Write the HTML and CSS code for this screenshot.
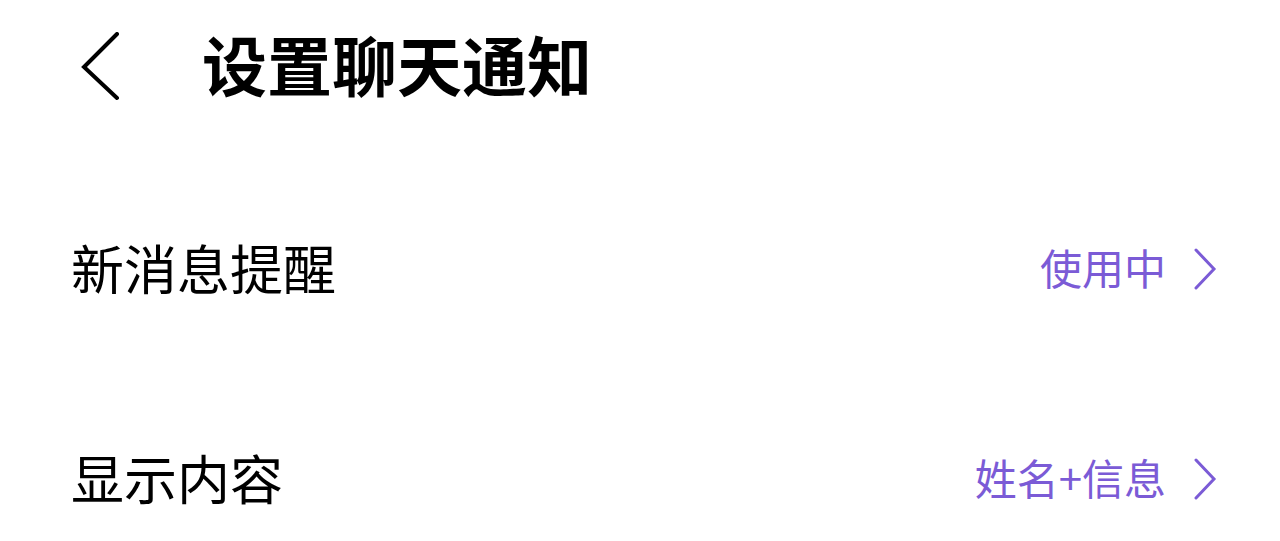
FILE: index.html
```html
<!DOCTYPE html>
<html lang="zh">
<head>
<meta charset="utf-8">
<link rel="stylesheet" href="styles.css">
</head>
<body>
<div class="page">
  <header class="header">
    <svg class="back" width="40" height="70" viewBox="0 0 40 70">
      <polyline points="36,2 3,35 36,66" fill="none" stroke="#000" stroke-width="4" stroke-linecap="round" stroke-linejoin="miter"/>
    </svg>
    <h1 class="title">设置聊天通知</h1>
  </header>
  <div class="list">
    <div class="row">
      <span class="label">新消息提醒</span>
      <span class="value">使用中
        <svg class="chev" width="26" height="42" viewBox="0 0 26 42">
          <polyline points="4,2 22,21 4,40" fill="none" stroke="#7b5bd6" stroke-width="3" stroke-linecap="round"/>
        </svg>
      </span>
    </div>
    <div class="row">
      <span class="label">显示内容</span>
      <span class="value">姓名+信息
        <svg class="chev" width="26" height="42" viewBox="0 0 26 42">
          <polyline points="4,2 22,21 4,40" fill="none" stroke="#7b5bd6" stroke-width="3" stroke-linecap="round"/>
        </svg>
      </span>
    </div>
  </div>
</div>
</body>
</html>
```
FILE: styles.css
```css
html, body {
  margin: 0;
  padding: 0;
  background: #fff;
}
body {
  font-family: "Noto Sans CJK SC", "Noto Sans", sans-serif;
  color: #000;
}
.page {
  width: 1280px;
  height: 541px;
  overflow: hidden;
}
.header {
  height: 134px;
  display: flex;
  align-items: center;
  padding-left: 81px;
}
.back {
  display: block;
}
.title {
  margin: 0 0 7px 81px;
  font-size: 65px;
  font-weight: 700;
  line-height: 1;
}
.list {
  padding-top: 28px;
}
.row {
  height: 210px;
  display: flex;
  align-items: center;
  justify-content: space-between;
  padding: 0 62px 0 71px;
}
.label {
  font-size: 53px;
  line-height: 1;
}
.value {
  display: flex;
  align-items: center;
  gap: 26px;
  font-size: 42px;
  line-height: 1;
  color: #7b5bd6;
}
.chev {
  display: block;
  margin-top: 3px;
}
```
